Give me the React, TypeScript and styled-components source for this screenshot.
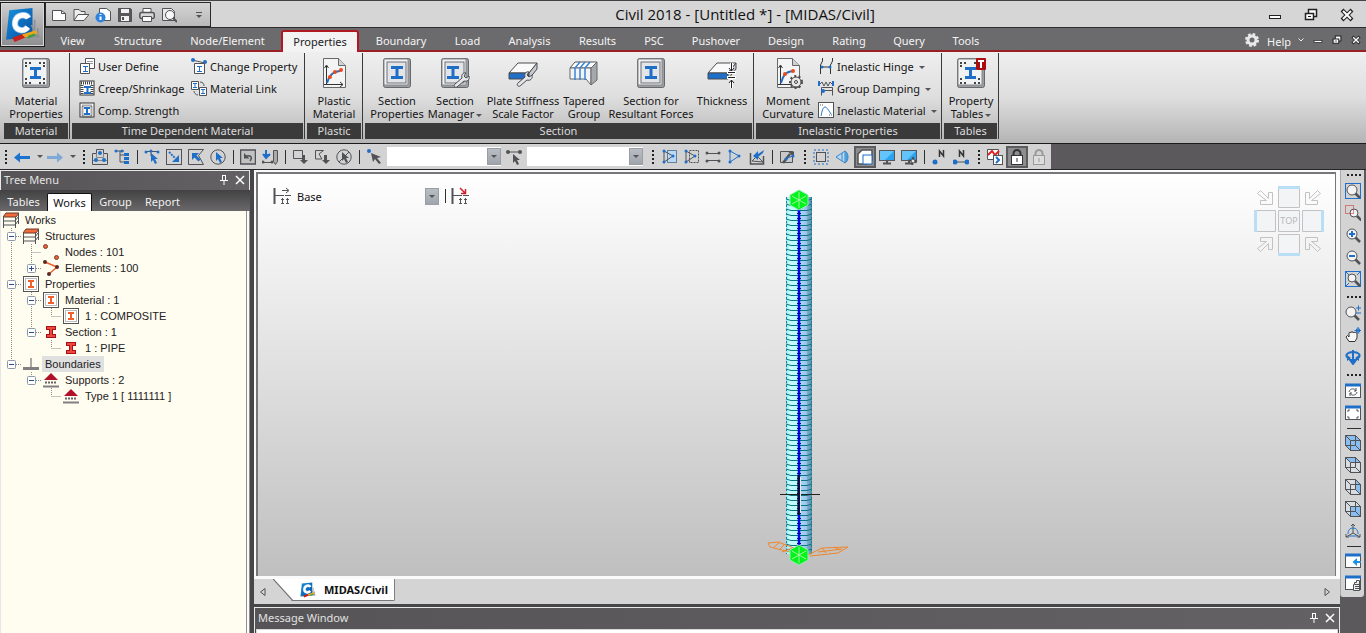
import React from "react";
import styled, { createGlobalStyle, css } from "styled-components";

const BLUE = "#1f6fc8";
const INK = "#505256";
const UI_FONT = '"Noto Sans", "Open Sans", sans-serif';

const GlobalStyle = createGlobalStyle`
  * { box-sizing: border-box; }
  html, body, #root { height: 100%; }
  body { margin: 0; background: #5b595b; font-family: ${UI_FONT}; font-size: 11px; color: #1c1c1c; overflow: hidden; }
  button, select { font: inherit; color: inherit; border: 0; background: none; padding: 0; margin: 0; }
  svg { display: block; flex: none; }
  ul { list-style: none; margin: 0; padding: 0; }
`;

const Page = styled.div`
  display: flex;
  flex-direction: column;
  height: 100%;
  min-height: 480px;
`;

/* ---------- title bar ---------- */
const TitleBar = styled.header`
  display: flex;
  flex: none;
  height: 28px;
  padding: 1px 1px 0 45px;
  background: #d6d6d6;
  border-top: 1px solid #444244;
  border-bottom: 1px solid #2e2d2e;
`;
const AppButton = styled.button`
  position: absolute;
  left: 0;
  top: 2px;
  z-index: 2;
  width: 45px;
  height: 45px;
  display: flex;
  align-items: center;
  justify-content: center;
  border: 1px solid #1b1b1b;
  box-shadow: inset 0 0 0 1px #d8d8d8;
  background: linear-gradient(#cfcfcf, #8d8c8e);
`;
const QuickAccess = styled.div`
  display: flex;
  align-items: center;
  width: 166px;
  height: 25px;
  padding-left: 2px;
  border: 1px solid #2a2a2a;
  background: linear-gradient(#d4d4d4, #b9b9b9);
`;
const IconButton = styled.button<{ $active?: boolean }>`
  display: flex;
  flex: none;
  align-items: center;
  justify-content: center;
  width: 22px;
  height: 22px;
  ${(p) => p.$active && css`
    background: #8d8d8f;
    border: 2px solid #5c5c5e;
  `}
`;
const QuickMore = styled(IconButton)`
  margin-left: 8px;
`;
const WindowTitle = styled.h1`
  flex: 1;
  margin: 0;
  padding-left: 22px;
  text-align: center;
  font: 400 15px/25px "Open Sans", sans-serif;
  color: #111;
`;
const WindowButton = styled(IconButton)`
  width: 36px;
  height: 25px;
`;

/* ---------- ribbon ---------- */
const TabRow = styled.nav`
  display: flex;
  flex: none;
  height: 24px;
  padding-left: 45px;
  background: #6b6a6c;
  border-bottom: 2px solid #9a1f24;
`;
const RibbonTab = styled.button<{ $w: number; $active?: boolean }>`
  flex: none;
  width: ${(p) => p.$w}px;
  height: 24px;
  line-height: 26px;
  font-size: 11px;
  color: #f4f4f4;
  white-space: nowrap;
  ${(p) => p.$active && css`
    margin: 2px 2px 0;
    height: 22px;
    line-height: 18px;
    color: #222;
    background: #f3f3f3;
    border: 2px solid #b0191f;
    border-bottom: 0;
    border-radius: 3px 3px 0 0;
  `}
`;
const TabRowEnd = styled.div`
  display: flex;
  align-items: center;
  height: 24px;
  margin-left: auto;
  padding-right: 1px;
`;
const HelpLink = styled.a`
  margin: 2px 2px 0 4px;
  color: #f4f4f4;
  text-decoration: none;
`;
const MdiButton = styled(IconButton)`
  width: 19px;
`;
const MdiDrop = styled(IconButton)`
  width: 15px;
`;
const Ribbon = styled.section`
  display: flex;
  flex: none;
  gap: 2px;
  height: 91px;
  padding: 1px 0 4px 4px;
  background: linear-gradient(#efefef, #dedede 50%, #b4b4b4);
`;
const Group = styled.div<{ $w: number }>`
  display: flex;
  flex: none;
  flex-direction: column;
  width: ${(p) => p.$w}px;
  border-right: 1px solid #3a3a3a;
  padding-right: 1px;
`;
const GroupBody = styled.div`
  display: flex;
  flex: 1;
  padding: 2px 0 0 2px;
`;
const GroupLabel = styled.div`
  height: 16px;
  line-height: 15px;
  text-align: center;
  color: #dcdcdc;
  background: #3b3a3b;
`;
const BigButton = styled.button<{ $w: number }>`
  display: flex;
  flex: none;
  flex-direction: column;
  align-items: center;
  gap: 5px;
  width: ${(p) => p.$w}px;
  padding-top: 2px;
  line-height: 13px;
  text-align: center;
  white-space: nowrap;
  color: #151515;
`;
const SmallColumn = styled.div<{ $w: number; $indent?: number }>`
  display: flex;
  flex: none;
  flex-direction: column;
  width: ${(p) => p.$w}px;
  margin-left: ${(p) => p.$indent ?? 0}px;
`;
const SmallButton = styled.button`
  display: flex;
  align-items: center;
  gap: 3px;
  height: 22px;
  white-space: nowrap;
  color: #151515;
`;
const Caret = styled.span`
  display: inline-block;
  margin-left: 2px;
  vertical-align: middle;
  border: 3px solid transparent;
  border-top-color: #555;
  border-bottom: 0;
`;

/* ---------- icon tool bars ---------- */
const ToolRow = styled.div`
  display: flex;
  flex: none;
  height: 27px;
  border-top: 1px solid #1a1a1a;
  border-bottom: 1px solid #262626;
`;
const Strip = styled.div<{ $w: number }>`
  display: flex;
  align-items: center;
  flex: none;
  width: ${(p) => p.$w}px;
  padding-left: 1px;
  background: #d3d3d3;
`;
const Grip = styled.span<{ $side?: boolean }>`
  flex: none;
  ${(p) => p.$side
    ? css`
        width: 14px;
        height: 2px;
        margin: 4px 5px;
        background: repeating-linear-gradient(90deg, #222 0 2px, transparent 2px 4px);
      `
    : css`
        width: 2px;
        height: 14px;
        margin: 0 4px;
        background: repeating-linear-gradient(#222 0 2px, transparent 2px 4px);
      `}
`;
const Rule = styled.span<{ $side?: boolean }>`
  flex: none;
  background: #2f2f2f;
  ${(p) => p.$side
    ? css`width: 14px; height: 1px; margin: 4px 5px 3px;`
    : css`width: 1px; height: 14px; margin: 0 3px 0 4px;`}
`;
const DropArrow = styled(IconButton)`
  width: 11px;
`;
const ComboBox = styled.div<{ $w: number }>`
  position: relative;
  flex: none;
  width: ${(p) => p.$w}px;
  height: 19px;
  margin: 0 2px;
`;
const ComboSelect = styled.select`
  width: 100%;
  height: 19px;
  padding-left: 4px;
  appearance: none;
  border-radius: 0;
  background: #fff;
  color: #111;
`;
const ComboArrow = styled.span`
  position: absolute;
  right: 0;
  top: 1px;
  display: flex;
  align-items: center;
  justify-content: center;
  width: 14px;
  height: 17px;
  background: linear-gradient(#b9bec6, #a0a4ab);
  border: 1px solid #9a9da3;
  pointer-events: none;
  & > ${Caret} { margin-left: 0; }
`;
const ViewSelect = styled(ComboSelect)`
  background: transparent;
`;

/* ---------- work area ---------- */
const Workspace = styled.main`
  display: flex;
  flex: 1;
  min-height: 0;
  background: #464547;
`;
const TreePanel = styled.aside`
  display: flex;
  flex: none;
  flex-direction: column;
  width: 250px;
  margin-right: 4px;
`;
const PanelTitle = styled.div`
  display: flex;
  flex: none;
  align-items: center;
  height: 20px;
  padding: 0 1px 2px 3px;
  border: 1px solid #e8e8e8;
  border-bottom: 0;
  background: linear-gradient(90deg, #565456, #636163);
  color: #e2e2e2;
`;
const PanelTitleText = styled.span`
  flex: 1;
`;
const PanelButton = styled(IconButton)`
  width: 16px;
  height: 18px;
`;
const TreeTabs = styled.div`
  display: flex;
  flex: none;
  align-items: flex-end;
  height: 21px;
  background: linear-gradient(#434243, #6a686a);
`;
const TreeTab = styled.button<{ $w: number; $active?: boolean }>`
  width: ${(p) => p.$w}px;
  height: 18px;
  line-height: 16px;
  color: #f1f1f1;
  ${(p) => p.$active && css`
    color: #111;
    background: #fff;
    border: 1px solid #111;
    border-bottom: 0;
    line-height: 14px;
    border-radius: 2px 2px 0 0;
  `}
`;
const TreeList = styled.ul`
  flex: 1;
  min-height: 0;
  padding-top: 1px;
  overflow: hidden;
  background: #fffcf0;
  border-left: 1px solid #e6e6ea;
  border-right: 4px double #8e8d98;
  font: 11px/16px "Liberation Sans", Arial, sans-serif;
  color: #222;
`;
const TreeRow = styled.li`
  display: flex;
  height: 16px;
`;
const TreeIcon = styled.span`
  width: 18px;
  padding-left: 2px;
`;
const TreeLabel = styled.span<{ $selected?: boolean }>`
  margin-left: 3px;
  padding: 0 3px;
  white-space: nowrap;
  background: ${(p) => (p.$selected ? "#e0e0e0" : "transparent")};
`;

const Center = styled.div`
  display: flex;
  flex: 1;
  min-width: 0;
  flex-direction: column;
`;
const ViewFrame = styled.div`
  flex: 1;
  min-height: 0;
  padding: 2px 4px 3px 2px;
  background: #fafafa;
`;
const Viewport = styled.div`
  position: relative;
  display: flex;
  justify-content: center;
  height: 100%;
  padding-top: 6px;
  overflow: hidden;
  border: solid #77767a;
  border-width: 2px 1px 0 2px;
  background: linear-gradient(#ffffff, #bfbfbf);
`;
const StageBar = styled.div`
  position: absolute;
  left: 15px;
  top: 11px;
  display: flex;
  align-items: center;
`;
const NavCube = styled.div`
  position: absolute;
  right: 11px;
  top: 12px;
`;
const ViewTabs = styled.div`
  display: flex;
  flex: none;
  align-items: center;
  height: 25px;
  padding-right: 4px;
  background: #d4d4d4;
`;
const ScrollButton = styled(IconButton)`
  width: 18px;
`;
const DocumentTab = styled.button`
  position: relative;
  display: flex;
  align-items: center;
  gap: 8px;
  align-self: flex-start;
  height: 22px;
  padding: 0 6px 0 28px;
  background: #fff;
  border: solid #77767a;
  border-width: 0 1px 1px 0;
  border-radius: 0 0 2px 0;
  clip-path: polygon(0 0, 100% 0, 100% 100%, 20px 100%);
  font-weight: 700;
  color: #111;
  &::before {
    content: "";
    position: absolute;
    left: 0;
    top: 0;
    width: 22px;
    height: 22px;
    background: #77767a;
    clip-path: polygon(0 0, 2px 0, 22px 100%, 20px 100%);
  }
`;
const Spacer = styled.span`
  flex: 1;
`;
const MessagePanel = styled.section`
  flex: none;
  margin-top: 3px;
  border: 1px solid #e8e8e8;
  border-bottom: 0;
`;
const MessageTitle = styled(PanelTitle)`
  border: 0;
  height: 21px;
`;
const MessageBody = styled.div`
  height: 4px;
  margin: 0 1px;
  border: 1px solid #d8d8d8;
  border-bottom: 0;
  background: #fff;
`;
const SideColumn = styled.div`
  flex: none;
  width: 26px;
  background: #5b595b;
`;
const SideStrip = styled.div`
  display: flex;
  flex-direction: column;
  width: 24px;
  padding: 0 0 3px 1px;
  border-left: 1px solid #a9a9a9;
  border-radius: 0 0 3px 3px;
  background: #d3d3d3;
  & > ${Grip}:not(:first-child) { margin-top: 6px; }
`;

/* ---------- drawings ---------- */
type SvgProps = { s?: number; box?: string; children: React.ReactNode };
const Ico = ({ s = 16, box, children }: SvgProps) => (
  <svg width={s} height={s} viewBox={box ?? `0 0 ${s} ${s}`} fill="none" stroke={INK} aria-hidden="true">
    {children}
  </svg>
);

const Beam = ({ x, y, w, h, c = BLUE, t = 2 }: { x: number; y: number; w: number; h: number; c?: string; t?: number }) => (
  <path
    stroke="none"
    fill={c}
    d={`M${x} ${y}h${w}v${t}h${-(w - t) / 2}v${h - 2 * t}h${(w - t) / 2}v${t}h${-w}v${-t}h${(w - t) / 2}v${-(h - 2 * t)}h${-(w - t) / 2}z`}
  />
);
const Cursor = ({ x, y, c = BLUE }: { x: number; y: number; c?: string }) => (
  <path stroke="none" fill={c} d={`M${x} ${y}v9l2-2 2 4 2-1-2-4h3z`} />
);
const Dots = ({ pts, c = BLUE, r = 1.5 }: { pts: number[][]; c?: string; r?: number }) => (
  <>{pts.map(([x, y], i) => <circle key={i} cx={x} cy={y} r={r} fill={c} stroke="none" />)}</>
);
const Logo = ({ s }: { s: number }) => (
  <svg width={s} height={s} viewBox="0 0 34 34" fill="none" aria-hidden="true">
    <defs>
      <linearGradient id="logoBlue" x1="0" y1="0" x2="1" y2="1">
        <stop offset="0" stopColor="#1590dc" /><stop offset="1" stopColor="#0a4ea0" />
      </linearGradient>
    </defs>
    <path d="M4 3 26 1v27L1 31z" fill="url(#logoBlue)" />
    <path d="M22 10.500c-2-4-11-4-12.500 3.500-1.500 8 8 10.500 12 5" stroke="#8fc4ee" strokeWidth="6" />
    <path d="M22 10.500c-2-4-11-4-12.500 3.500-1.500 8 8 10.500 12 5" stroke="#fff" strokeWidth="4.500" />
    <path d="M28 12v14M25 17l5 11M31 20v8M24 28h9" stroke="#8b9097" strokeWidth="1.500" />
    <path d="M7 29 18 25l3 3-12 5z" fill="#c8201a" />
    <path d="M16 26 29 22l2 3-12 4z" fill="#e9a71c" />
    <path d="M22 27l6-2 1 2-7 3z" fill="#3fa043" />
  </svg>
);

const Plate = ({ dots }: { dots?: boolean }) => (
  <>
    <rect x="2.500" y="1.500" width="27" height="29" rx="2" fill="#9b9da0" stroke="#66686b" />
    <rect x="3" y="2" width="24" height="26" rx="1" fill="#f1f2f4" stroke="#85878a" />
    {!dots && <rect x="6" y="5" width="19" height="21" fill="#e2e4e8" stroke="#6f7174" />}
    {dots && (
      <path stroke="#444" strokeWidth="2" strokeDasharray="2 2" d="M5 6h6M5 9h2M19 6h6M23 9h2M5 26h6M5 22h2M19 26h6M23 22h2" />
    )}
  </>
);
const PageSheet = () => (
  <>
    <path d="M5.500 1.500h15l7 7v22h-22z" fill="#f4f4f4" stroke="#66686b" />
    <path d="M20.500 1.500v7h7" fill="#cfd1d4" stroke="#66686b" />
    <path d="M8.500 27V9M6.500 11l2-3 2 3M6 27.500h19M22 25l3 2.500-3 2.500" stroke="#333" />
  </>
);
const Wrench = ({ x, y }: { x: number; y: number }) => (
  <path transform={`translate(${x} ${y})`} fill="#e3e5e8" stroke="#4a4c50"
    d="M1 12 8 6C7 3 9 0 12 1l-2 3 2 2 3-2c1 4-2 6-5 5l-7 6c-2 1-4-1-2-3z" />
);
const Slab = () => (
  <>
    <path d="M2 16 11 6h19l-8 10z" fill="#fafafa" stroke="#4a4c50" />
    <path d="M2 16h20v6H2z" fill={BLUE} stroke="#4a4c50" />
    <path d="M22 16l8-10v6l-8 10z" fill="#c8cbd0" stroke="#4a4c50" />
  </>
);
const Cog = ({ x, y, r = 5 }: { x: number; y: number; r?: number }) => (
  <>
    <circle cx={x} cy={y} r={r} fill="#e8e8e8" stroke="#4a4a4c" />
    <circle cx={x} cy={y} r={r + 1} strokeWidth="2" strokeDasharray="2 2.300" stroke="#4a4a4c" />
    <circle cx={x} cy={y} r={r - 1} fill="#e8e8e8" stroke="none" />
    {r > 3 && <circle cx={x} cy={y} r="1.500" stroke="#4a4a4c" />}
  </>
);

const big: Record<string, React.ReactNode> = {
  material: <Ico s={32}><Plate dots /><Beam x={10} y={10} w={11} h={12} t={3} /></Ico>,
  plastic: <Ico s={32}><PageSheet /><path d="M9 26c2-6 4-11 13-12" stroke={BLUE} strokeWidth="2" /><Dots pts={[[12, 20], [17, 15], [23, 13]]} c="#ee4a1c" r={2} /></Ico>,
  section: <Ico s={32}><Plate /><Beam x={10} y={9} w={12} h={13} t={3} /></Ico>,
  manager: <Ico s={32}><Plate /><Beam x={8} y={9} w={12} h={13} t={3} /><Wrench x={15} y={15} /></Ico>,
  stiffness: <Ico s={32}><Slab /><Wrench x={10} y={14} /></Ico>,
  tapered: (
    <Ico s={32}>
      <path d="M2 11 7 5h22l-6 6z" fill="#fff" /><path d="M2 11h21v17l-5-6H2z" fill="#f2f4f6" stroke="#66686b" />
      <path d="M23 11l6-6v18l-6 5z" fill="#a5a9ae" stroke="#66686b" />
      <path d="M7 23V11l5-6M12 23V11l5-6M17 23V11l5-6" stroke="#3b82d4" strokeWidth="1.500" />
    </Ico>
  ),
  thickness: (
    <Ico s={32}>
      <Slab />
      <path d="M25.500 6v7M25.500 31V21M21 15.500h9M21 20.500h9" stroke="#fff" strokeWidth="3" />
      <path d="M25.500 6v8M23 11l2.500 3 2.500-3M25.500 31v-8M23 26l2.500-3 2.500 3M22 15.500h7M22 20.500h7" stroke="#222" />
    </Ico>
  ),
  moment: <Ico s={32}><PageSheet /><path d="M9 26c2-6 3-11 12-12" stroke={BLUE} strokeWidth="2" /><Dots pts={[[13, 17], [21, 14]]} c="#ee4a1c" r={2} /><Cog x={24} y={25} /></Ico>,
  tables: <Ico s={32}><Plate dots /><Beam x={10} y={10} w={11} h={12} t={3} /><rect x="21" y="1" width="10" height="12" rx="1" fill="#a80d10" stroke="none" /><path d="M23 4h6M26 4v7" stroke="#fff" strokeWidth="2" /></Ico>,
};

const hatchFrame = (
  <><rect x="1" y="1" width="14" height="14" fill="#fff" stroke="#333" /><path d="M2 3h12M3 5v9M13 5v9" stroke="#444" strokeWidth="3" strokeDasharray="1 1" /></>
);
const small: Record<string, React.ReactNode> = {
  user: <Ico><path d="M6.500 .5h9v10h-9z" fill="#fff" /><path d="M8 3.500h6M8 5.500h6" stroke="#999" /><path d="M1.500 5.500h9v10h-9z" fill="#fff" /><Beam x={4} y={8} w={5} h={6} t={1} /></Ico>,
  creep: <Ico>{hatchFrame}<Beam x={5} y={6} w={7} h={8} /></Ico>,
  comp: <Ico><rect x="1" y="1" width="14" height="14" fill="#fff" stroke="#333" /><rect x="3.500" y="3.500" width="9" height="11" strokeDasharray="1 1" strokeWidth="2" /><Beam x={5} y={5} w={6} h={8} /></Ico>,
  change: <Ico><path d="M1 2l13 3" /><Dots pts={[[2, 2], [14, 4]]} r={2} /><path d="M3.500 5.500h10v10h-10z" fill="#fff" /><Beam x={6} y={8} w={5} h={6} t={1} /></Ico>,
  link: <Ico><path d="M.5 1.500h7v8h-7zM8.500 7.500h7v8h-7z" fill="#fff" /><Beam x={2} y={3} w={4} h={5} t={1} /><Beam x={10} y={9} w={4} h={5} t={1} /><path d="M9 2c3 0 4 2 4 4M3 11c0 2 2 4 4 4" /></Ico>,
  hinge: <Ico><path d="M4.500 0v3l-2 4v9M14.500 0v3l-2 4v9M3 9h10" stroke="#333" /><Dots pts={[[4, 9], [12, 9]]} /></Ico>,
  damping: <Ico><path d="M1 1v5M15 1v5" stroke={BLUE} strokeWidth="2" /><path d="M2 4l2-2 2 4 2-4 2 4 2-4 2 2" /><path d="M3.500 15.500v-8h11v8M3 10.500h12" /><Dots pts={[[5, 11]]} r={2} /></Ico>,
  inelastic: <Ico><rect x=".5" y=".5" width="15" height="15" fill="#fff" /><path d="M3 14C4 9 5 5 7 5s4 4 6 7" stroke={BLUE} /><path d="M2 3h4M11 13h4" strokeDasharray="1 1" /></Ico>,
};

const quick = [
  ["New", <Ico><path d="M1.500 3.500h9l4 3v7h-13z" fill="#fff" /><path d="M10.500 3.500v3h4" /></Ico>],
  ["Open", <Ico><path d="M1 13.500V2.500h5l2 2h4v3" fill="#eee" /><path d="M1 13.500l4-6h11l-5 6z" fill="#fafafa" /></Ico>],
  ["Project information", <Ico><path d="M4.500 1.500h7l4 3v9h-11z" fill="#fff" /><circle cx="5.500" cy="10.500" r="5" fill="#2f83e0" stroke="none" /><path d="M5.500 7v1M5.500 9.500V13" stroke="#fff" strokeWidth="2" /></Ico>],
  ["Save", <Ico><path d="M1.500 1.500h12l1 1v12h-13z" fill="#58585c" /><path d="M4 2h8v4H4zM4 9h8v5H4z" fill="#f2f2f2" stroke="none" /><path d="M6 10v3" strokeWidth="2" /></Ico>],
  ["Print", <Ico><path d="M4 5V1.500h8V5" fill="#fff" /><rect x=".8" y="5.500" width="14.500" height="6" rx="2" fill="#d9d9d9" strokeWidth="1.500" /><path d="M3.500 9.500h9v5h-9z" fill="#fff" /></Ico>],
  ["Preview", <Ico><path d="M1.500 1.500h9l3 3v9h-12z" fill="#e9e9e9" /><circle cx="9" cy="8" r="4.500" fill="#f8f8f8" /><path d="M12 11l4 4" strokeWidth="2" /></Ico>],
] as [string, React.ReactNode][];

const arrow = (c: string, left: boolean) => (
  <Ico><path d={left ? "M0 8.500l6-5v3.500h10v3H6v3.500z" : "M16 8.500l-6-5v3.500H0v3h10v3.500z"} fill={c} stroke="none" /></Ico>
);
const poly = (c: string) => <><path d="M3 2v11l9-6z" stroke={c} /><Dots pts={[[3, 2], [3, 13], [12, 7]]} /></>;
const padlock = (c: string, body: string) => (
  <Ico><path d="M4.500 7V4.500a3.500 3.500 0 0 1 7 0V7" stroke={c} strokeWidth="2" /><rect x="2.500" y="6.500" width="11" height="9" fill={body} stroke={c} /><path d="M8 9v4" stroke={c} /></Ico>
);
const screen = (
  <><rect x=".5" y="1.500" width="15" height="10" fill="#2ba3ee" stroke="#55575a" /><path d="M1 2h14L6 11H1z" fill="#63c4fa" stroke="none" /><path d="M8 12v2M4 14.500h8" strokeWidth="2" /></>
);

const tools = {
  selectA: [
    ["Select single", <Ico><path d="M.5 4.500h4v-4h7v4h4v11h-15z" /><path d="M4.500 4.500v4h7v-4M1 11.500h14" stroke="#85878b" /><Dots pts={[[8, 4], [4, 11], [12, 11]]} r={2} /></Ico>],
    ["Select identity", <Ico><path d="M2 2h8M6 2v11h6M6 6h6" /><Dots pts={[[2, 2], [8, 2]]} /><path d="M10 4h5v3h-5zM10 8h5v3h-5zM10 12h5v3h-5z" fill={BLUE} stroke="none" /></Ico>],
  ],
  selectB: [
    ["Select pick", <Ico><path d="M1 2.500h14M7 2v5" /><Dots pts={[[2, 3], [7, 2], [14, 3]]} /><Cursor x={7} y={4} /></Ico>],
    ["Select window", <Ico><rect x=".5" y=".5" width="15" height="15" /><path d="M3 3l6 6" stroke={BLUE} strokeWidth="2" strokeDasharray="2 1" /><path d="M13 6v7H6z" fill={BLUE} stroke="none" /></Ico>],
    ["Select polygon", <Ico><path d="M.5 .5h15l-5 6 5 9H.5z" /><path d="M4 4h7L8.500 6.500l4 4-2 2-4-4L4 11z" fill={BLUE} stroke="none" /></Ico>],
    ["Select intersect", <Ico><circle cx="8" cy="8" r="7.200" /><Cursor x={6} y={3} /></Ico>],
  ],
  selectC: [
    ["Select previous", <Ico><rect x=".5" y="1" width="15" height="14" fill="#c2c2c2" strokeWidth="1.500" /><path d="M10 12c3-4 0-7-5-4" strokeWidth="1.500" /><path d="M4 4v5.500h5.500z" fill={INK} stroke="none" /></Ico>],
    ["Select recent", <Ico><path d="M4 1v7M1 5l3 4 4-4M1 6h7" stroke={BLUE} strokeWidth="2" /><path d="M1 13.500h9" /><Dots pts={[[1, 13], [10, 13]]} c={INK} /><path d="M11.500 1.500h4v11l-2 3-2-3z" fill="#aaa" /></Ico>],
  ],
  selectD: [
    ["Unselect window", <Ico><path d="M1.500 1.500h9v8h-9z" /><path d="M10 6h3v5h3l-4 4-4-4h2z" fill={INK} stroke="none" /></Ico>],
    ["Unselect polygon", <Ico><path d="M1.500 1.500h8L5 5l3 5H1.500z" /><path d="M10 6h3v5h3l-4 4-4-4h2z" fill={INK} stroke="none" /></Ico>],
    ["Unselect intersect", <Ico><circle cx="8" cy="8" r="7.200" /><Cursor x={6} y={3} c={INK} /><path d="M3 13 13 3" /></Ico>],
  ],
  activeA: [
    ["Activate", <Ico><rect x="6.500" y="1.500" width="9" height="12" fill="#b9d8f5" stroke="#64809e" />{poly(INK)}</Ico>],
    ["Inactivate", <Ico><rect x="6.500" y="1.500" width="9" height="12" strokeDasharray="2 1" />{poly(INK)}</Ico>],
    ["Inverse", <Ico><path d="M1 4.500h14M1 11.500h14" /><Dots pts={[[2, 4], [14, 4], [2, 12], [14, 12]]} c={INK} /></Ico>],
    ["Active all", <Ico>{poly(BLUE)}</Ico>],
    ["Active previous", <Ico><path d="M1.500 4v11h13V7" strokeWidth="1.500" /><path d="M3 12l5-5 6 6z" /><path d="M15 1 9 5V2L4 7l5 4V8l5-4z" fill={BLUE} stroke="none" /></Ico>],
  ],
  view: [
    ["Grid frame", <Ico><rect x="3.500" y="3.500" width="9" height="9" /><rect x="1" y="1" width="14" height="14" stroke={BLUE} strokeDasharray="2 2" /></Ico>],
    ["Perspective", <Ico><path d="M1 8 10 2v12z" fill="#b7dbf6" stroke="#3884c4" /><path d="M10 2c4 2 4 10 0 12M7 4v8" fill="#4ea0dc" stroke="#3884c4" /></Ico>],
    ["Hidden surface", <Ico><path d="M1 5l4-4h10v10h-5v4H1z" fill="#fff" strokeWidth="1.500" /><rect x="6" y="6" width="9" height="9" fill="#fff" stroke={BLUE} /></Ico>],
    ["Display", <Ico>{screen}</Ico>],
    ["Display option", <Ico>{screen}<Cog x={12} y={12} r={2} /></Ico>],
  ],
};

const lens = (x = 7, y = 7, r = 5) => (
  <><path d={`M${x + 3} ${y + 3}l5 5`} strokeWidth="2.500" /><circle cx={x} cy={y} r={r} fill="#f3f3f3" /></>
);
const cube = (face: string) => (
  <Ico>
    <path d="M.5 .5h10l5 5v10h-10l-5-5z" fill="#d9dde2" />
    <path d={face} fill="#8abdf0" stroke="none" />
    <path d="M.5 .5h10v10H.5zM5.500 5.500h10v10h-10zM.5 .5l5 5M10.500 .5l5 5M.5 10.500l5 5M10.500 10.500l5 5" />
  </Ico>
);
const win = <><rect x=".5" y="1.500" width="15" height="13" fill="#fff" /><path d="M0 2h16" stroke={BLUE} strokeWidth="3" /></>;

const side = {
  zoom: [
    ["Zoom fit", <Ico>{lens(7, 7, 5)}<rect x=".5" y=".5" width="15" height="15" stroke={BLUE} /></Ico>],
    ["Zoom window", <Ico>{lens(9, 8, 4)}<rect x=".5" y=".5" width="8" height="8" stroke="#c22" strokeDasharray="1 1" /></Ico>],
    ["Zoom in", <Ico>{lens()}<path d="M4 7h6M7 4v6" stroke={BLUE} strokeWidth="2" /></Ico>],
    ["Zoom out", <Ico>{lens()}<path d="M4 7h6" stroke={BLUE} strokeWidth="2" /></Ico>],
    ["Auto fit", <Ico><rect x=".5" y=".5" width="15" height="15" stroke={BLUE} /><path d="M1 1l3 3M15 1l-3 3M1 15l3-3" stroke={BLUE} />{lens(7, 7, 4)}</Ico>],
  ],
  move: [
    ["Dynamic zoom", <Ico>{lens(6, 7, 5)}<path d="M11 3h5M13.500 .5v5M11 8h5" stroke={BLUE} /></Ico>],
    ["Pan", <Ico><path d="M4 14.500 1 10l1.500-1.500L4 10V6c0-1 2-1 2 0 0-2 2-2 2 0 0-1 2-1 2 0 0-1 2-1 2 1v4l-2 3.500z" fill="#f6f6f6" stroke="#333" /><path d="M13 0v7M9.500 3.500h7" stroke={BLUE} /><path d="M11.500 2h3v3h-3z" stroke={BLUE} /></Ico>],
    ["Rotate", <Ico><path d="M3 9C-1 6 3 3 8 3s9 3 5 6" stroke={BLUE} strokeWidth="2" /><path d="M2 6l4 3-4 3zM14 6l-4 3 4 3z" fill={BLUE} stroke="none" /><path d="M8 1v10M5 11l3 4 3-4z" fill={BLUE} stroke={BLUE} strokeWidth="2" /></Ico>],
  ],
  window: [
    ["Redraw", <Ico>{win}<path d="M4 9c1-4 6-4 7-1M12 9c-1 4-6 4-7 1M11 5v3H9M5 13v-3h2" /></Ico>],
    ["Initial view", <Ico>{win}<path d="M3 7V5h2M11 5h2v2M3 11v2h2M13 11v2h-2" /></Ico>],
  ],
  cubes: [
    ["Iso view", cube("M0 0h10l5 5v10H5l-5-5z")],
    ["Top view", cube("M0 0h10l5 5H5z")],
    ["Right view", cube("M10 0l5 5v10l-5-5z")],
    ["Front view", cube("M5 5h10v10H5z")],
    ["Angle view", <Ico><path d="M8 10V1M8 10l-7 4M8 10l7 4M6 3l2-2 2 2M1 11v3h3M15 11v3h-3" /><path d="M3 11c0-4 2-6 5-6s5 2 5 6M4 13h8" stroke={BLUE} /></Ico>],
  ],
  end: [
    ["Previous view", <Ico>{win}<path d="M16 9h-5" stroke="#1c8fe8" strokeWidth="2" /><path d="M12 5v8L7.500 9z" stroke="none" fill="#1c8fe8" /></Ico>],
    ["Named view", <Ico>{win}<path d="M8.500 9.500h1v-2h2v-2h3v10h-6z" fill="#eee" /><path d="M10 9.500h4M10 11.500h4M10 13.500h4" /></Ico>],
  ],
};

type ToolList = [string, React.ReactNode][];
const Tools = ({ list, active }: { list: unknown; active?: string }) => (
  <>{(list as ToolList).map(([name, icon]) => <IconButton key={name} aria-label={name} $active={name === active}>{icon}</IconButton>)}</>
);

const MinGlyph = ({ s }: { s: number }) => <Ico s={s} box="0 0 14 14"><rect x="1.500" y="7.500" width="11" height="3" fill="#fff" stroke="#222" /></Ico>;
const RestoreGlyph = ({ s }: { s: number }) => <Ico s={s} box="0 0 14 14"><path d="M4.500 1.500h8v7h-8z" fill="#fff" stroke="#222" strokeWidth="1.500" /><path d="M1.500 5.500h8v6h-8z" fill="#fff" stroke="#222" strokeWidth="1.500" /><path d="M4 8.500h3" stroke="#222" /></Ico>;
const CloseGlyph = ({ s }: { s: number }) => <Ico s={s} box="0 0 14 14"><path d="M2 2l10 10M12 2 2 12" stroke="#222" strokeWidth="4" /><path d="M3 3l8 8M11 3l-8 8" stroke="#fff" strokeWidth="2" /></Ico>;
const PinGlyph = () => <Ico s={10}><path d="M3 .5h4M3.500 1v4M6.500 1v4M1 5.500h8M5 6v4" stroke="#fff" /></Ico>;
const CrossGlyph = () => <Ico s={10}><path d="M1 1l8 8M9 1 1 9" stroke="#fff" strokeWidth="1.500" /></Ico>;

/* ---------- tree ---------- */
const treeIcons: Record<string, React.ReactNode> = {
  frame: <Ico><path d="M3 1h13l-3 4H0z" fill="#f26a3c" stroke="#6b3a2a" /><path d="M.5 5v11M12.500 5v11M15.500 1v11M1 9h11l3-4M1 13h11l3-4" /></Ico>,
  nodes: <Ico><circle cx="2.500" cy="2.500" r="2" fill="#f0602c" stroke="#7a4030" /><circle cx="13.500" cy="13.500" r="2" fill="#f0602c" stroke="#7a4030" /></Ico>,
  elements: <Ico><path d="M2 2l12 5-8 7" stroke="#f0602c" strokeWidth="1.500" /><Dots pts={[[2, 2], [14, 7], [6, 14]]} c="#5a2a24" r={2} /></Ico>,
  mat: <Ico><rect x=".5" y=".5" width="15" height="15" fill="#fff" stroke="#555" /><rect x="2.500" y="2.500" width="11" height="11" strokeDasharray="1 1" stroke="#777" /><Beam x={5} y={4} w={6} h={8} c="#f0602c" /></Ico>,
  sec: <Ico><Beam x={3} y={2} w={10} h={12} t={4} c="#a3121a" /><Beam x={4} y={3} w={8} h={10} t={2} c="#f2473c" /></Ico>,
  bound: <Ico><path d="M8 2v9" /><path d="M0 12.500h16" stroke="#808080" strokeWidth="3" /></Ico>,
  support: <Ico><path d="M8 1l7 7H1z" fill="#b01028" stroke="none" /><path d="M0 14.500h16" stroke="#808080" strokeWidth="2" /><path d="M2 10.500h12" stroke="#666" strokeWidth="2" strokeDasharray="2 1" /></Ico>,
};
/* guide codes: | pass-through, T branch, L last branch, - open node, e last open node, p last closed node */
const guidePaths: Record<string, string> = {
  "|": "M10.500 0v16", T: "M10.500 0v16M10.500 8.500h10", L: "M10.500 0v8M10.500 8.500h10",
  "-": "M10.500 0v16M15 8.500h6", e: "M10.500 0v8M15 8.500h6", p: "M10.500 0v8M15 8.500h6", " ": "",
};
const Guide = ({ code }: { code: string }) => (
  <svg width="20" height="16" viewBox="0 0 20 16" fill="none" aria-hidden="true">
    <path d={guidePaths[code]} stroke="#8a8a8a" strokeDasharray="1 1" />
    {"-ep".includes(code) && (
      <>
        <rect x="6.500" y="4.500" width="8" height="8" rx="1" fill="#fff" stroke="#8c98a8" />
        <path d={code === "p" ? "M8 8.500h5M10.500 6v5" : "M8 8.500h5"} stroke="#2c4a9c" />
      </>
    )}
  </svg>
);
const treeRows: [string, string, string][] = [
  ["", "frame", "Works"],
  ["-", "frame", "Structures"],
  ["|T", "nodes", "Nodes : 101"],
  ["|p", "elements", "Elements : 100"],
  ["-", "mat", "Properties"],
  ["|-", "mat", "Material : 1"],
  ["||L", "mat", "1 : COMPOSITE"],
  ["|e", "sec", "Section : 1"],
  ["| L", "sec", "1 : PIPE"],
  ["e", "bound", "Boundaries"],
  [" e", "support", "Supports : 2"],
  ["  L", "support", "Type 1 [ 1111111 ]"],
];

/* ---------- model view ---------- */
const Support = ({ y }: { y: number }) => (
  <>
    <path d={`M799 ${y - 10}l9 5v10l-9 5-9-5v-10z`} fill="#00f51a" stroke="#9be8b4" />
    <path d={`M799 ${y - 8}v16M792 ${y - 4}l14 8M806 ${y - 4}l-14 8`} stroke="#a9f0a0" />
  </>
);
const Model = () => (
  <svg width="120" height="390" viewBox="737 180 120 390" fill="none" role="img" aria-label="Pipe model">
    <defs>
      <linearGradient id="pipe">
        <stop offset="0" stopColor="#8fe0f0" /><stop offset=".12" stopColor="#c2fdff" /><stop offset=".5" stopColor="#bdf8ff" />
        <stop offset=".56" stopColor="#a9d6f8" /><stop offset=".78" stopColor="#9cc6ee" /><stop offset=".82" stopColor="#88a9d0" />
        <stop offset="1" stopColor="#4b8fa6" />
      </linearGradient>
    </defs>
    <rect x="786" y="197" width="26" height="357" fill="url(#pipe)" />
    {Array.from({ length: 71 }, (_, i) => {
      const y = 199 + i * 5;
      return <path key={i} d={`M786 ${y}l5 1.500h16l5-1.500`} stroke="#08787e" />;
    })}
    <path d="M786.500 197v357M811.500 197v357" stroke="#1b7f8c" strokeDasharray="2 2" />
    <path d="M799 208v340" stroke="#0505ee" strokeWidth="2.500" />
    <path d="M799 208v340" stroke="#0000a0" strokeWidth="4" strokeDasharray="1 4" />
    <path d="M768 543l10-1 16 6-4 4-20-5zM774 547l6-5M780 549l5-5M782 552l10-4M808 555l14-7 26-1-10 6-28 3M818 552l24-3M822 548l4 5M834 547l6 3" stroke="#f0862a" />
    <path d="M780 494.500h40" stroke="#222" /><path d="M798.500 475v40" stroke="#111" strokeWidth="2" /><path d="M800.500 477v36" stroke="#e8e8e8" />
    <Support y={200} />
    <Support y={555} />
  </svg>
);
const NavDrawing = () => (
  <svg width="70" height="70" viewBox="0 0 70 70" fill="none" stroke="#c2c2c4" aria-hidden="true">
    <path d="M24.500 2.500h21v19h-21zM24.500 24.500h21v21h-21zM24.500 48.500h21v19h-21zM2.500 24.500h19v21h-19zM48.500 24.500h19v21h-19z" fill="#f3f4f6" />
    <path d="M24 1.500h22M24 68.500h22M1.500 24v22M68.500 24v22" stroke="#b9def5" strokeWidth="3" />
    <path d="M3.500 7.500l3-3 8 8v-6h4v12h-12v-4h6zM66.500 7.500l-3-3-8 8v-6h-4v12h12v-4h-6zM3.500 62.500l3 3 8-8v6h4v-12h-12v4h6zM66.500 62.500l-3 3-8-8v6h-4v-12h12v4h-6z" />
    <text x="35" y="38" textAnchor="middle" fontSize="9" fontFamily="Open Sans" fill="#b4b4b6" stroke="none">TOP</text>
  </svg>
);
const StageGlyph = ({ red }: { red?: boolean }) => (
  <Ico s={18}>
    <path d="M1.500 1v16" strokeWidth="2" /><path d="M2 8.500h9M12 8.500h6" strokeDasharray="9 1 1 1 1 1" />
    <path d="M9.500 11v6M14.500 11v6M8 12.500h3M13 12.500h3M8 16.500h3M13 16.500h3" stroke="#555" />
    {red ? <path d="M9 1l5 5M14.500 2v4.500H10" stroke="#d0202c" strokeWidth="1.500" /> : <path d="M9 3.500h6M13 1l3 2.500L13 6" />}
  </Ico>
);

const ribbonTabs: [string, number][] = [
  ["View", 55], ["Structure", 76], ["Node/Element", 103], ["Properties", 78], ["Boundary", 80], ["Load", 53], ["Analysis", 71],
  ["Results", 65], ["PSC", 48], ["Pushover", 76], ["Design", 64], ["Rating", 62], ["Query", 58], ["Tools", 56],
];

const Big = ({ w, icon, a, b, drop }: { w: number; icon: string; a: string; b?: string; drop?: boolean }) => (
  <BigButton $w={w}>
    {big[icon]}
    <span>{a}{b && <><br />{b}</>}{drop && <Caret />}</span>
  </BigButton>
);
const Small = ({ icon, text, drop }: { icon: string; text: string; drop?: boolean }) => (
  <SmallButton>{small[icon]}<span>{text}{drop && <> <Caret /></>}</span></SmallButton>
);

export default function App() {
  return (
    <Page>
      <GlobalStyle />
      <AppButton aria-label="Application menu"><Logo s={36} /></AppButton>
      <TitleBar>
        <QuickAccess>
          <Tools list={quick} />
          <QuickMore aria-label="More"><Ico s={8}><path d="M1 1.500h6" /><path d="M1 4h6L4 7z" fill={INK} stroke="none" /></Ico></QuickMore>
        </QuickAccess>
        <WindowTitle>Civil 2018 - [Untitled *] - [MIDAS/Civil]</WindowTitle>
        <WindowButton aria-label="Minimize"><MinGlyph s={14} /></WindowButton>
        <WindowButton aria-label="Restore"><RestoreGlyph s={14} /></WindowButton>
        <WindowButton aria-label="Close"><CloseGlyph s={14} /></WindowButton>
      </TitleBar>
      <TabRow>
        {ribbonTabs.map(([name, w]) => <RibbonTab key={name} $w={w} $active={name === "Properties"}>{name}</RibbonTab>)}
        <TabRowEnd>
          <IconButton aria-label="Settings"><Ico><circle cx="8" cy="8" r="5.500" stroke="#e8e8e8" strokeWidth="3" strokeDasharray="2.500 1.800" /><circle cx="8" cy="8" r="4" stroke="#e8e8e8" strokeWidth="3" /></Ico></IconButton>
          <HelpLink href="#help">Help</HelpLink>
          <MdiDrop aria-label="Help menu"><Ico s={8}><path d="M1.500 2.500 4 5l2.500-2.500" stroke="#eee" /></Ico></MdiDrop>
          <MdiButton aria-label="Minimize view"><MinGlyph s={10} /></MdiButton>
          <MdiButton aria-label="Restore view"><RestoreGlyph s={10} /></MdiButton>
          <MdiButton aria-label="Close view"><CloseGlyph s={10} /></MdiButton>
        </TabRowEnd>
      </TabRow>
      <Ribbon>
        <Group $w={66}>
          <GroupBody><Big w={60} icon="material" a="Material" b="Properties" /></GroupBody>
          <GroupLabel>Material</GroupLabel>
        </Group>
        <Group $w={233}>
          <GroupBody>
            <SmallColumn $w={112} $indent={5}>
              <Small icon="user" text="User Define" /><Small icon="creep" text="Creep/Shrinkage" /><Small icon="comp" text="Comp. Strength" />
            </SmallColumn>
            <SmallColumn $w={110}>
              <Small icon="change" text="Change Property" /><Small icon="link" text="Material Link" />
            </SmallColumn>
          </GroupBody>
          <GroupLabel>Time Dependent Material</GroupLabel>
        </Group>
        <Group $w={56}>
          <GroupBody><Big w={50} icon="plastic" a="Plastic" b="Material" /></GroupBody>
          <GroupLabel>Plastic</GroupLabel>
        </Group>
        <Group $w={389}>
          <GroupBody>
            <Big w={60} icon="section" a="Section" b="Properties" />
            <Big w={56} icon="manager" a="Section" b="Manager" drop />
            <Big w={80} icon="stiffness" a="Plate Stiffness" b="Scale Factor" />
            <Big w={42} icon="tapered" a="Tapered" b="Group" />
            <Big w={92} icon="section" a="Section for" b="Resultant Forces" />
            <Big w={50} icon="thickness" a="Thickness" />
          </GroupBody>
          <GroupLabel>Section</GroupLabel>
        </Group>
        <Group $w={186}>
          <GroupBody>
            <Big w={60} icon="moment" a="Moment" b="Curvature" />
            <SmallColumn $w={122}>
              <Small icon="hinge" text="Inelastic Hinge" drop /><Small icon="damping" text="Group Damping" drop /><Small icon="inelastic" text="Inelastic Material" drop />
            </SmallColumn>
          </GroupBody>
          <GroupLabel>Inelastic Properties</GroupLabel>
        </Group>
        <Group $w={55}>
          <GroupBody><Big w={50} icon="tables" a="Property" b="Tables" drop /></GroupBody>
          <GroupLabel>Tables</GroupLabel>
        </Group>
      </Ribbon>
      <ToolRow>
        <Strip $w={78}>
          <Grip />
          <IconButton aria-label="Undo">{arrow("#1b73cc", true)}</IconButton>
          <DropArrow aria-label="Undo list"><Caret /></DropArrow>
          <IconButton aria-label="Redo">{arrow("#7ea9d6", false)}</IconButton>
          <DropArrow aria-label="Redo list"><Caret /></DropArrow>
        </Strip>
        <Strip $w={569}>
          <Grip /><Tools list={tools.selectA} /><Rule />
          <Tools list={tools.selectB} /><Rule />
          <Tools list={tools.selectC} /><Rule />
          <Tools list={tools.selectD} /><Rule />
          <IconButton aria-label="Select nodes"><Ico><Dots pts={[[3, 2]]} r={2} /><path d="M5 4l10 4-4 1 4 5-2 1-4-5-2 3z" fill={INK} stroke="none" /></Ico></IconButton>
          <ComboBox $w={114}><ComboSelect aria-label="Node selection"><option /></ComboSelect><ComboArrow><Caret /></ComboArrow></ComboBox>
          <IconButton aria-label="Select elements"><Ico><path d="M1 3h14" /><Dots pts={[[2, 3], [14, 3]]} c={INK} r={2} /><Cursor x={7} y={5} c={INK} /></Ico></IconButton>
          <ComboBox $w={116}><ComboSelect aria-label="Element selection"><option /></ComboSelect><ComboArrow><Caret /></ComboArrow></ComboBox>
        </Strip>
        <Strip $w={152}>
          <Grip /><Tools list={tools.activeA} /><Rule />
          <IconButton aria-label="Activate by identity"><Ico><path d="M1.500 2.500h12v11h-12z" fill="#c8c8c8" /><path d="M4 14 11 5" strokeWidth="2.500" /><path d="M9 2.500h6v6z" fill={INK} stroke="none" /><path d="M8 9l6-2" stroke={BLUE} /><Dots pts={[[14, 7], [7, 10]]} /></Ico></IconButton>
        </Strip>
        <Strip $w={174}>
          <Grip /><Tools list={tools.view} active="Hidden surface" /><Rule />
          <IconButton aria-label="Node number"><Ico><Dots pts={[[4, 13]]} r={2.5} /><path d="M8.500 8V2l4 5V1" stroke="#333" strokeWidth="1.500" /></Ico></IconButton>
          <IconButton aria-label="Element number"><Ico><path d="M2 13h12" /><Dots pts={[[2, 13], [14, 13]]} r={2.5} /><path d="M6.500 8V2l4 5V1" stroke="#333" strokeWidth="1.500" /></Ico></IconButton>
        </Strip>
        <Strip $w={78}>
          <Grip />
          <IconButton aria-label="Preprocessing mode"><Ico><path d="M.5 .5h11v10H.5z" fill="#fff" /><path d="M1 6l4-4 3 4 4-4" stroke="#d22" strokeWidth="2" /><rect x="6.500" y="6.500" width="9" height="9" fill="#fff" /><path d="M9 8l3 3-3 3" stroke={BLUE} strokeWidth="2" /></Ico></IconButton>
          <IconButton $active aria-label="Lock">{padlock("#333", "#fff")}</IconButton>
          <IconButton aria-label="Unlock">{padlock("#999", "#ddd")}</IconButton>
        </Strip>
      </ToolRow>
      <Workspace>
        <TreePanel>
          <PanelTitle>
            <PanelTitleText>Tree Menu</PanelTitleText>
            <PanelButton aria-label="Pin tree"><PinGlyph /></PanelButton>
            <PanelButton aria-label="Close tree"><CrossGlyph /></PanelButton>
          </PanelTitle>
          <TreeTabs>
            <TreeTab $w={47}>Tables</TreeTab><TreeTab $w={45} $active>Works</TreeTab><TreeTab $w={47}>Group</TreeTab><TreeTab $w={47}>Report</TreeTab>
          </TreeTabs>
          <TreeList>
            {treeRows.map(([guides, icon, label]) => (
              <TreeRow key={label}>
                {guides.split("").map((code, i) => <Guide key={i} code={code} />)}
                <TreeIcon>{treeIcons[icon]}</TreeIcon>
                <TreeLabel $selected={label === "Boundaries"}>{label}</TreeLabel>
              </TreeRow>
            ))}
          </TreeList>
        </TreePanel>
        <Center>
          <ViewFrame>
            <Viewport>
              <Model />
              <StageBar>
                <StageGlyph />
                <ComboBox $w={146}>
                  <ViewSelect aria-label="Construction stage"><option>Base</option></ViewSelect>
                  <ComboArrow><Caret /></ComboArrow>
                </ComboBox>
                <Rule /><IconButton aria-label="Define stage"><StageGlyph red /></IconButton>
              </StageBar>
              <NavCube><NavDrawing /></NavCube>
            </Viewport>
          </ViewFrame>
          <ViewTabs>
            <ScrollButton aria-label="Previous tabs"><Ico s={10}><path d="M7 1.500v7L2.500 5z" /></Ico></ScrollButton>
            <DocumentTab><Logo s={16} />MIDAS/Civil</DocumentTab>
            <Spacer />
            <ScrollButton aria-label="Next tabs"><Ico s={10}><path d="M3 1.500v7L7.500 5z" /></Ico></ScrollButton>
          </ViewTabs>
          <MessagePanel>
            <MessageTitle>
              <PanelTitleText>Message Window</PanelTitleText>
              <PanelButton aria-label="Pin messages"><PinGlyph /></PanelButton>
              <PanelButton aria-label="Close messages"><CrossGlyph /></PanelButton>
            </MessageTitle>
            <MessageBody />
          </MessagePanel>
        </Center>
        <SideColumn>
          <SideStrip>
            <Grip $side /><Tools list={side.zoom} />
            <Grip $side /><Tools list={side.move} />
            <Grip $side /><Tools list={side.window} /><Rule $side />
            <Tools list={side.cubes} /><Rule $side />
            <Tools list={side.end} />
          </SideStrip>
        </SideColumn>
      </Workspace>
    </Page>
  );
}
